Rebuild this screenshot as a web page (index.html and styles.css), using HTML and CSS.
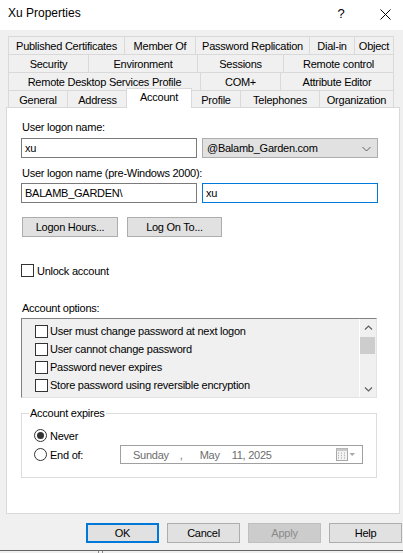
FILE: index.html
```html
<!DOCTYPE html>
<html>
<head>
<meta charset="utf-8">
<title>Xu Properties</title>
<link rel="stylesheet" href="styles.css">
</head>
<body>
<div class="window">
  <div class="titlebar">
    <span class="title">Xu Properties</span>
    <span class="help-q">?</span>
    <svg class="close" width="11" height="11" viewBox="0 0 11 11"><path d="M0.5 0.5 L10.5 10.5 M10.5 0.5 L0.5 10.5" stroke="#000" stroke-width="1" fill="none"/></svg>
  </div>

  <div class="tabs">
    <div class="tabrow">
      <div class="tab w116">Published Certificates</div>
      <div class="tab w71">Member Of</div>
      <div class="tab w114">Password Replication</div>
      <div class="tab w45">Dial-in</div>
      <div class="tab w40">Object</div>
    </div>
    <div class="tabrow">
      <div class="tab w80">Security</div>
      <div class="tab w109">Environment</div>
      <div class="tab w86">Sessions</div>
      <div class="tab w111">Remote control</div>
    </div>
    <div class="tabrow">
      <div class="tab w192">Remote Desktop Services Profile</div>
      <div class="tab w80">COM+</div>
      <div class="tab w114">Attribute Editor</div>
    </div>
    <div class="tabrow last">
      <div class="tab w59">General</div>
      <div class="tab w60">Address</div>
      <div class="tab active">Account</div>
      <div class="tab w49">Profile</div>
      <div class="tab w79">Telephones</div>
      <div class="tab w75">Organization</div>
    </div>
  </div>

  <div class="panel">
    <div class="lbl">User logon name:</div>
    <div class="row r-logon">
      <div class="field">xu</div>
      <div class="combo">
        <span>@Balamb_Garden.com</span>
        <svg class="combo-arrow" width="9" height="6" viewBox="0 0 9 6"><path d="M0.5 1 L4.5 5 L8.5 1" stroke="#606060" stroke-width="1" fill="none"/></svg>
      </div>
    </div>
    <div class="lbl lbl2">User logon name (pre-Windows 2000):</div>
    <div class="row r-pre">
      <div class="field">BALAMB_GARDEN\</div>
      <div class="field focused">xu</div>
    </div>
    <div class="row r-btns">
      <div class="btn b-hours">Logon Hours...</div>
      <div class="btn b-logon">Log On To...</div>
    </div>
    <div class="check-row unlock">
      <span class="chk"></span><span>Unlock account</span>
    </div>
    <div class="lbl lbl-opts">Account options:</div>
    <div class="list">
      <div class="list-items">
        <div class="item"><span class="chk"></span><span>User must change password at next logon</span></div>
        <div class="item"><span class="chk"></span><span>User cannot change password</span></div>
        <div class="item"><span class="chk"></span><span>Password never expires</span></div>
        <div class="item"><span class="chk"></span><span>Store password using reversible encryption</span></div>
      </div>
      <div class="scroll">
        <div class="sbtn"><svg width="9" height="6" viewBox="0 0 9 6"><path d="M1 4.5 L4.5 1 L8 4.5" stroke="#606060" stroke-width="1.2" fill="none"/></svg></div>
        <div class="thumb"></div>
        <div class="track"></div>
        <div class="sbtn"><svg width="9" height="6" viewBox="0 0 9 6"><path d="M1 1.5 L4.5 5 L8 1.5" stroke="#606060" stroke-width="1.2" fill="none"/></svg></div>
      </div>
    </div>
    <fieldset class="group">
      <legend>Account expires</legend>
      <div class="radio-row">
        <span class="radio on"></span><span class="radio-text">Never</span>
      </div>
      <div class="radio-row">
        <span class="radio"></span><span class="radio-text">End of:</span>
        <div class="datepick">
          <span>Sunday</span><span class="d-comma">,</span><span class="d-month">May</span><span class="d-day">11, 2025</span>
          <svg class="cal" width="20" height="13" viewBox="0 0 20 13">
            <rect x="0.5" y="0.5" width="11" height="12" fill="#f4f4f4" stroke="#a8a8a8"/>
            <rect x="0.5" y="0.5" width="11" height="2.5" fill="#c8c8c8"/>
            <path d="M2 5h1M5 5h1M8 5h1M2 7.5h1M5 7.5h1M8 7.5h1M2 10h1M5 10h1M8 10h1" stroke="#b8b8b8" stroke-width="1.5"/>
            <path d="M13.5 5 L19 5 L16.25 8 Z" fill="#a8a8a8"/>
          </svg>
        </div>
      </div>
    </fieldset>
  </div>

  <div class="footer">
    <div class="btn default">OK</div>
    <div class="btn">Cancel</div>
    <div class="btn disabled">Apply</div>
    <div class="btn">Help</div>
  </div>
  <div class="bottomedge"><span class="mark"></span></div>
</div>
</body>
</html>
```

FILE: styles.css
```css
* { box-sizing: border-box; }
html, body { margin: 0; padding: 0; }
body {
  width: 403px;
  height: 553px;
  overflow: hidden;
  background: #f0f0f0;
  font-family: "Liberation Sans", Arial, sans-serif;
  font-size: 11px;
  letter-spacing: -0.25px;
  color: #000;
}
.window { display: flex; flex-direction: column; height: 553px; }

/* title bar */
.titlebar {
  height: 30px;
  flex: none;
  background: #fff;
  display: flex;
  align-items: center;
  padding: 0 0 4px 8px;
  font-size: 12px;
  letter-spacing: 0;
}
.title { flex: 1; }
.help-q { width: 10px; text-align: center; margin-right: 34px; font-size: 13px; }
.close { margin-right: 12px; margin-top: 3px; }

/* tabs */
.tabs { margin: 6px 0 0 8px; width: 386px; flex: none; }
.tabrow { display: flex; height: 18px; }
.tabrow.last { height: 17px; }
.tab {
  flex: none;
  border-left: 1px solid #d9d9d9;
  border-top: 1px solid #d9d9d9;
  background: #f0f0f0;
  text-align: center;
  line-height: 18px;
  white-space: nowrap;
}
.tab:last-child { border-right: 1px solid #d9d9d9; }
.tab.active {
  width: 66px;
  height: 20px;
  margin: -2px -1px 0 -1px;
  align-self: flex-start;
  background: #fff;
  border: 1px solid #d9d9d9;
  border-bottom: none;
  position: relative;
  z-index: 1;
  line-height: 16px;
}
.w40 { width: 40px; } .w45 { width: 45px; } .w49 { width: 49px; }
.w59 { width: 59px; } .w60 { width: 60px; } .w71 { width: 71px; }
.w75 { width: 75px; } .w79 { width: 79px; } .w80 { width: 80px; }
.w86 { width: 86px; } .w109 { width: 109px; } .w111 { width: 111px; }
.w114 { width: 114px; } .w116 { width: 116px; } .w192 { width: 192px; }

/* panel */
.panel {
  flex: none;
  margin-left: 6px;
  width: 394px;
  height: 407px;
  background: #fff;
  border: 1px solid #d9d9d9;
  padding: 12px 0 0 14px;
}
.lbl { height: 14px; line-height: 14px; margin-left: 1px; white-space: nowrap; }
.lbl2 { margin-top: 8px; }
.lbl-opts { margin-top: 24px; }
.row { display: flex; gap: 5px; }
.r-logon { margin-top: 4px; }
.r-pre { margin-top: 3px; }
.r-btns { margin-top: 14px; margin-left: 1px; gap: 9px; }

.field {
  width: 176px;
  height: 20px;
  border: 1px solid #7a7a7a;
  background: #fff;
  padding-left: 3px;
  line-height: 18px;
  white-space: nowrap;
}
.field.focused { border-color: #0078d7; }
.combo {
  width: 176px;
  height: 20px;
  border: 1px solid #adadad;
  background: #e1e1e1;
  padding: 0 6px 0 4px;
  line-height: 18px;
  display: flex;
  align-items: center;
  justify-content: space-between;
}
.combo-arrow { margin-top: 1px; }

.btn {
  width: 73px;
  height: 20px;
  flex: none;
  background: #e1e1e1;
  border: 1px solid #adadad;
  text-align: center;
  line-height: 18px;
}
.btn.default { border: 2px solid #0078d7; line-height: 16px; }
.btn.disabled { background: #cccccc; border-color: #bfbfbf; color: #8a8a8a; }
.b-hours { width: 96px; }
.b-logon { width: 95px; }

.chk {
  width: 13px;
  height: 13px;
  flex: none;
  border: 1px solid #333;
  background: #fff;
}
.check-row { display: flex; align-items: center; gap: 3px; height: 13px; margin-top: 27px; }

/* list */
.list {
  margin-top: 3px;
  width: 356px;
  height: 80px;
  border: 1px solid;
  border-color: #828282 #e3e3e3 #e3e3e3 #828282;
  background: #f0f0f0;
  display: flex;
}
.list-items { flex: 1; padding: 3px 0 0 13px; }
.item { height: 18px; display: flex; align-items: center; gap: 2px; white-space: nowrap; }
.scroll { width: 17px; flex: none; display: flex; flex-direction: column; border-left: 1px solid #fff; }
.sbtn { height: 17px; display: flex; align-items: center; justify-content: center; }
.thumb { height: 17px; margin: 1px 1px 0 0; background: #cdcdcd; }
.track { flex: 1; }

/* group */
.group {
  margin: 8px 0 0 0;
  width: 356px;
  min-width: 0;
  border: 1px solid #dcdcdc;
  padding: 6px 0 13px 12px;
}
.group legend {
  padding: 0 1px;
  margin-left: -5px;
  line-height: 14px;
}
.radio-row { display: flex; align-items: center; height: 19px; }
.radio {
  width: 13px;
  height: 13px;
  flex: none;
  border: 1px solid #333;
  border-radius: 50%;
  background: #fff;
  position: relative;
}
.radio.on::after {
  content: "";
  position: absolute;
  left: 2px;
  top: 2px;
  width: 7px;
  height: 7px;
  border-radius: 50%;
  background: #333;
}
.radio-text { margin-left: 3px; width: 70px; }
.datepick {
  width: 243px;
  height: 19px;
  border: 1px solid #a0a0a0;
  display: flex;
  align-items: center;
  color: #6d6d6d;
  padding: 0 6px 0 12px;
  white-space: nowrap;
}
.d-comma { margin-left: 11px; }
.d-month { margin-left: 17px; }
.d-day { margin-left: 12px; }
.cal { margin-left: auto; }

/* footer */
.footer {
  flex: none;
  display: flex;
  justify-content: flex-end;
  gap: 8px;
  padding-right: 1px;
  margin-top: 9px;
}
.bottomedge {
  flex: none;
  margin-top: 7px;
  height: 3px;
  border-top: 1px solid #646464;
  display: flex;
  padding-left: 98px;
}
.mark { width: 5px; height: 2px; border-left: 1px solid #8a8a8a; border-right: 1px solid #8a8a8a; }
```
